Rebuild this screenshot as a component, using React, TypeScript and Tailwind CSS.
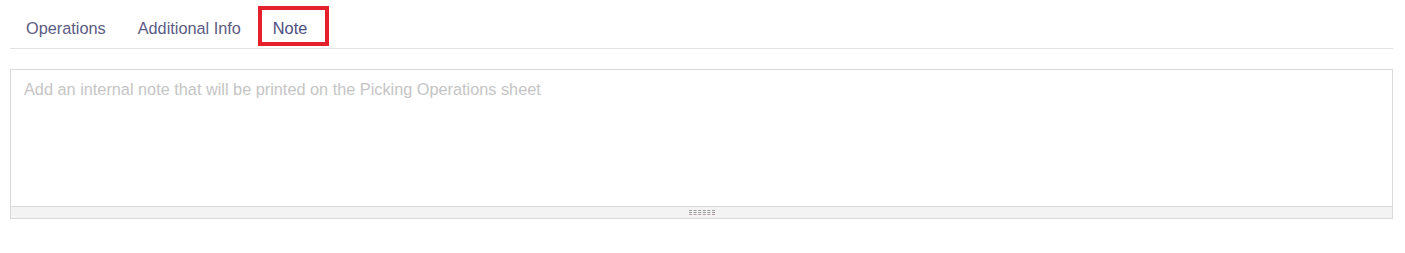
import React, { useState } from "react";

const tabs = ["Operations", "Additional Info", "Note"];

const App = () => {
  const [active, setActive] = useState<string>("Note");
  const [note, setNote] = useState<string>("");

  return (
    <div className="min-h-screen bg-white px-[10px] pt-2 font-['Liberation_Sans',Arial,sans-serif]">
      {/* tabs */}
      <div className="flex w-[1383px] border-b border-[#e3e3e6]">
        {tabs.map((tab) => (
          <button
            key={tab}
            onClick={() => setActive(tab)}
            className={`relative flex h-10 items-center px-4 pt-px text-[16.3px] leading-none ${active === tab ? "text-[#4d4d80]" : "text-[#5b5b85]"}`}
          >
            {tab}
            {tab === "Note" && <span className="pointer-events-none absolute left-px top-[-2px] h-10 w-[71px] border-4 border-[#e4202a]" />}
          </button>
        ))}
      </div>

      {/* note editor */}
      <div className="mt-5 flex h-[150px] w-[1383px] flex-col border border-[#d9d9d9]">
        <textarea
          value={note}
          onChange={(e) => setNote(e.target.value)}
          placeholder="Add an internal note that will be printed on the Picking Operations sheet"
          className="flex-1 resize-none px-[13px] pt-[10px] text-[16.3px] leading-[18px] text-[#333] outline-none placeholder:text-[#c5c5c5]"
        />
        <div className="flex h-3 items-center justify-center border-t border-[#d9d9d9] bg-[#f3f3f3]">
          <div className="flex w-[26px] flex-col gap-px">
            <span className="block h-0 border-t border-dashed border-[#9a9a9a]" />
            <span className="block h-0 border-t border-dashed border-[#9a9a9a]" />
            <span className="block h-0 border-t border-dashed border-[#b89aa8]" />
          </div>
        </div>
      </div>
    </div>
  );
};

export default App;
